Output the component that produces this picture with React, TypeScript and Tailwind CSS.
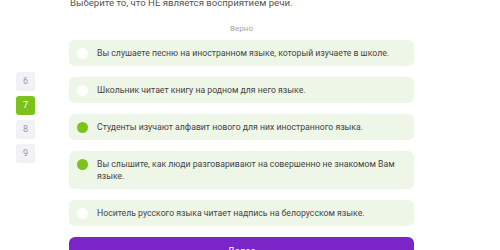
const options = [
    { text: 'Вы слушаете песню на иностранном языке, который изучаете в школе.', checked: false },
    { text: 'Школьник читает книгу на родном для него языке.', checked: false },
    { text: 'Студенты изучают алфавит нового для них иностранного языка.', checked: true },
    { text: 'Вы слышите, как люди разговаривают на совершенно не знакомом Вам языке.', checked: true },
    { text: 'Носитель русского языка читает надпись на белорусском языке.', checked: false },
];

const steps = ['6', '7', '8', '9'];

export default function App() {
    return (
        <div className="w-[500px] h-[250px] overflow-hidden bg-white font-['Roboto',sans-serif] flex">
            {/* Step numbers */}
            <div className="w-[69px] pl-4 pt-[72px] flex flex-col gap-[5px]">
                {steps.map((s) => (
                    <div
                        key={s}
                        className={`w-[19px] h-[19px] rounded-[3px] flex items-center justify-center text-[9px] ${
                            s === '7' ? 'bg-[#7cc21b] text-white' : 'bg-[#f1f1f6] text-[#9a9aa4]'
                        }`}
                    >
                        {s}
                    </div>
                ))}
            </div>

            {/* Question */}
            <div className="w-[345px] flex flex-col">
                <p className="-mt-[3px] pl-px text-[9.6px] leading-[12px] text-[#555]">
                    Выберите то, что НЕ является восприятием речи.
                </p>
                <p className="mt-[15px] text-center text-[8px] leading-[10px] text-[#a3a3a3]">Верно</p>
                <div className="mt-[6px] flex flex-col gap-[11px]">
                    {options.map((o) => (
                        <div key={o.text} className="bg-[#eef6e7] rounded-[6px] flex items-start py-[7px] pl-2 pr-[8px]">
                            <span
                                className={`mt-[0.5px] w-[11px] h-[11px] shrink-0 rounded-full ${
                                    o.checked ? 'bg-[#7cc21b]' : 'bg-white'
                                }`}
                            />
                            <span className="ml-[9px] pr-[2px] text-[8.7px] leading-[12px] text-[#444]">{o.text}</span>
                        </div>
                    ))}
                </div>
                <button className="mt-[11px] h-[26px] rounded-[6px] bg-[#7b25c9] text-white text-[9.5px] flex items-start justify-center pt-[7px]">
                    Далее
                </button>
            </div>
        </div>
    );
}
